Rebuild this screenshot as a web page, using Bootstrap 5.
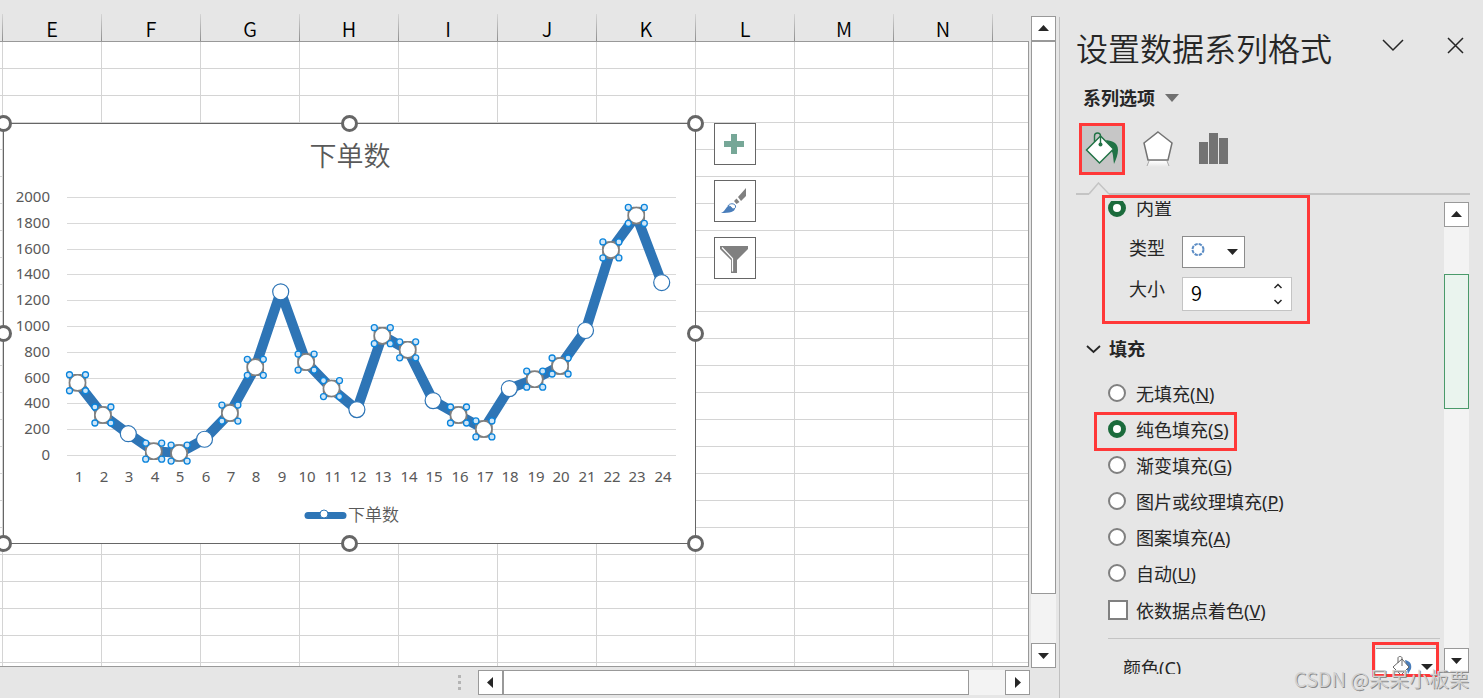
<!DOCTYPE html>
<html lang="zh-CN">
<head>
<meta charset="utf-8">
<meta name="viewport" content="width=device-width, initial-scale=1">
<title>设置数据系列格式</title>
<link rel="stylesheet" href="https://cdn.jsdelivr.net/npm/bootstrap@5.3.0/dist/css/bootstrap.min.css">
<style>
  :root { --chrome: #e6e6e6; --ink: #262626; --edge: #999; --rule: #d4d4d4; --mark: #ff3838; --excel: #217346; --cjk: "Noto Sans", "Noto Sans CJK SC", sans-serif; }
  body { background: var(--chrome); color: var(--ink); font: 18px/24px var(--cjk); }
  svg { display: block; flex: none; }
  button { color: inherit; font: inherit; }

  /* worksheet */
  .sheet-top { padding-top: 14px; }
  .col-heads { height: 28px; border-bottom: 1px solid var(--edge); }
  .col-head { flex: 0 0 99px; text-align: center; font: 350 20px/30px "Noto Sans CJK SC", sans-serif; color: #000;
    border-right: 1px solid; border-image: linear-gradient(#d8d8d8, #8c8c8c) 1; }
  .col-head.first { flex-basis: 3px; }
  .cells { border-right: 1px solid var(--edge); border-bottom: 1px solid var(--edge); background-color: #fff;
    background-image: linear-gradient(var(--rule) 1px, transparent 1px), linear-gradient(90deg, var(--rule) 1px, transparent 1px);
    background-size: 100% 27px, 99px 100%; background-position: 0 26px, 2px 0; }
  .chart-box { left: 3px; top: 81px; width: 693px; height: 421px; background: #fff; border: 1px solid #666; }
  .chart-box svg { margin: -1px; overflow: visible; }
  .chart-box text { fill: #595959; font: 15px var(--cjk); text-anchor: middle; }
  .chart-box .y-axis text { text-anchor: end; }
  .chart-box .chart-title { font: 350 27px "Noto Sans CJK SC", sans-serif; }
  .chart-box .legend-text { font: 350 17px "Noto Sans CJK SC", sans-serif; text-anchor: start; }
  .chart-tools { left: 714px; top: 81px; gap: 15px; }
  .chart-tool { width: 42px; height: 42px; padding: 0; border: 1px solid #666; background: #fff; }
  .chart-tool svg { margin: -1px; }

  /* scroll bars */
  .bar-v { width: 25px; background: #f3f3f3; }
  .bar-h { height: 25px; background: #f3f3f3; }
  .bar-main { margin: 16px 3px 0 2px; }
  .bar-arrow { flex: none; width: 25px; height: 25px; padding: 0; border: 1px solid var(--edge); background: #fff; }
  .bar-arrow svg { margin: -1px; }
  .bar-thumb { background: #fff; border: 1px solid var(--edge); }
  .bar-thumb.live { background: #eaf4ee; border-color: #4a9a6a; }
  .sheet-row { margin-bottom: -1px; }
  .sheet-top { margin-bottom: 1px; }
  .bottom-bar { height: 31px; padding: 3px 29px 3px 458px; gap: 17px; }
  .grip-dots i { display: block; width: 3px; height: 3px; margin: 3px 0; background: #b4b4b4; }

  /* task pane */
  .pane { flex: 0 0 424px; padding: 0 13px 0 16px; margin-top: 17px; border-left: 1px solid #c0c0c0; }
  .pane-head { height: 65px; }
  .pane-title { font: 350 32px/60px "Noto Sans CJK SC", sans-serif; }
  .plain-btn { padding: 0; border: 0; background: none; }
  .pane-menu { margin: 0 42px 0 0; }
  .group-btn { height: 24px; padding-left: 7px; gap: 10px; margin-top: 5px; font-weight: 700; }
  .pane-tabs { gap: 10px; margin-top: 13px; padding-left: 3px; }
  .pane-tab { width: 46px; height: 52px; padding: 0; border: 3px solid transparent; background: none; }
  .pane-tab.active { background: #c6c6c6; border-color: var(--mark); }
  .tab-rule { height: 20px; }
  .tab-rule svg { margin-top: 7px; }
  .tab-rule hr { height: 2px; background: #c4c4c4; border: 0; opacity: 1; margin: 18px 0 0; }
  .pane-body { margin: 6px 1px 24px 0; }
  .pane-fields { overflow: hidden; margin-right: 4px; }
  .opt { height: 36px; padding-left: 32px; gap: 10px; }
  .opt span { padding-top: 2px; }
  .opt input { appearance: none; flex: none; width: 18px; height: 18px; margin: 0; border: 2px solid #808080; background: #fff; border-radius: 50%; }
  .opt input:checked { border: 5px solid #1b6b3c; }
  .opt input[type=checkbox] { width: 20px; height: 20px; border-radius: 0; }
  .opt.tick { gap: 8px; margin-top: 1px; }
  .opt.builtin { height: 24px; margin-top: -5px; }
  .field { padding-left: 53px; gap: 17px; }
  .type-field { margin-top: 16px; }
  .size-field { margin-top: 9px; }
  .type-box { width: 63px; height: 32px; }
  .type-box select { appearance: none; width: 100%; height: 100%; border: 1px solid #8c8c8c; border-radius: 0; background: #fff; }
  .type-box svg { left: 0; top: 0; pointer-events: none; }
  .size-box { width: 110px; height: 34px; background: #fff; border: 1px solid #c4c4c4; }
  .size-box input { width: 80px; height: 30px; border: 0; padding: 0 8px; background: none; color: #000; font: 350 20px/30px "Noto Sans CJK SC", sans-serif; }
  .size-box button { width: 26px; height: 16px; }
  .section-btn { height: 24px; margin: 26px 0 14px; padding-left: 10px; gap: 8px; font-weight: 700; }
  .field-rule { margin: 10px 0 0 32px; border: 0; height: 1px; background: #c4c4c4; opacity: 1; }
  .color-row { padding: 9px 2px 0 47px; }
  .color-btn { width: 62px; height: 32px; padding: 0; border: 0; border-top: 1px solid #999; background: #fff; }
  .note { border: 3px solid var(--mark); pointer-events: none; }
  .note-marker { left: 26px; top: -6px; width: 208px; height: 129px; }
  .note-solid { left: 18px; top: 211px; width: 143px; height: 39px; }
  .note-color { right: 30px; bottom: -3px; width: 67px; height: 35px; }
  .bar-pane { margin: 1px 0 1px; }
  .credit { right: 14px; bottom: 4px; font: 350 20px/30px "Noto Sans CJK SC", sans-serif; color: #d2d2d2; text-shadow: 1px 1px 0 #8c8c8c; }
</style>
</head>
<body class="vh-100 overflow-hidden d-flex">

<main class="d-flex flex-column flex-grow-1 overflow-hidden">
  <div class="sheet-row d-flex flex-grow-1 overflow-hidden">
    <section class="sheet-top d-flex flex-column flex-grow-1 overflow-hidden" aria-label="工作表">
      <div class="col-heads d-flex overflow-hidden" id="colHeads"><div class="col-head first"></div></div>
      <div class="cells flex-grow-1 position-relative">
        <div class="chart-box position-absolute">
          <svg id="chart" width="693" height="421" viewBox="3 123 693 421" role="img" aria-label="下单数">
            <text class="chart-title" x="350" y="166">下单数</text>
            <g class="grid-lines" stroke="#d9d9d9" shape-rendering="crispEdges"></g>
            <g class="y-axis"></g>
            <g class="x-axis"></g>
            <polyline fill="none" stroke="#2e75b6" stroke-width="10" stroke-linejoin="round"/>
            <g class="markers" fill="#fff"></g>
            <path d="M308 515.500H343" stroke="#2e75b6" stroke-width="7" stroke-linecap="round"/>
            <circle cx="324" cy="514" r="4" fill="#fff" stroke="#2e75b6"/>
            <text class="legend-text" x="348" y="521">下单数</text>
            <g class="handles" fill="#fff" stroke="#666" stroke-width="3"></g>
          </svg>
        </div>
        <div class="chart-tools position-absolute d-flex flex-column">
          <button class="chart-tool" type="button" aria-label="图表元素">
            <svg width="42" height="42"><path d="M17 11h6v7h7v6h-7v7h-6v-7h-7v-6h7z" fill="#76a797"/></svg>
          </button>
          <button class="chart-tool" type="button" aria-label="图表样式">
            <svg width="42" height="42"><path d="M32 8v8l-5 5-3-4zM22.500 18.500l3 3.500-3 2-2.500-3z" fill="#808080"/><path d="M7 33c3-1 4-4 6-6 2-3 8-2 8 1 0 4-5 5-14 5z" fill="#4a7ebb"/><path d="M14 26c1-3 7-3 7.500 0 .5 2-1 3-3 3-1-2-2-3-4.500-3z" fill="#fff" stroke="#4a7ebb"/></svg>
          </button>
          <button class="chart-tool" type="button" aria-label="图表筛选器">
            <svg width="42" height="42"><path d="M6 9h28v3L23 23v13h-6V23L6 12z" fill="#808080"/><path d="M8 10.500l10.500 11v13" fill="none" stroke="#fff" stroke-width="1.200"/></svg>
          </button>
        </div>
      </div>
    </section>
    <div class="bar-v bar-main d-flex flex-column">
      <button class="bar-arrow" type="button" aria-label="向上"><svg width="25" height="25"><path d="M7 15h11l-5.500-6z" fill="#262626"/></svg></button>
      <div class="bar-thumb" style="flex:553 0 0"></div><div style="flex:49 0 0"></div>
      <button class="bar-arrow" type="button" aria-label="向下"><svg width="25" height="25"><path d="M7 10h11l-5.500 6z" fill="#262626"/></svg></button>
    </div>
  </div>
  <div class="bottom-bar d-flex align-items-center">
    <div class="grip-dots"><i></i><i></i><i></i></div>
    <div class="bar-h d-flex flex-grow-1">
      <button class="bar-arrow" type="button" aria-label="向左"><svg width="25" height="25"><path d="M15 7v11l-6-5.500z" fill="#262626"/></svg></button>
      <div class="bar-thumb" style="flex:466 0 0"></div><div style="flex:36 0 0"></div>
      <button class="bar-arrow" type="button" aria-label="向右"><svg width="25" height="25"><path d="M10 7v11l6-5.500z" fill="#262626"/></svg></button>
    </div>
  </div>
</main>

<aside class="pane d-flex flex-column" aria-label="设置数据系列格式">
  <header class="pane-head d-flex align-items-start">
    <h1 class="pane-title m-0 me-auto">设置数据系列格式</h1>
    <div class="d-flex align-items-center h-100 pb-2">
      <button class="plain-btn pane-menu" type="button" aria-label="窗格选项"><svg width="22" height="16"><path d="M1 3l10 10L21 3" fill="none" stroke="#262626" stroke-width="1.500"/></svg></button>
      <button class="plain-btn me-1" type="button" aria-label="关闭"><svg width="20" height="18"><path d="M2 2l15 15M17 2L2 17" fill="none" stroke="#262626" stroke-width="1.500"/></svg></button>
    </div>
  </header>
  <button class="plain-btn group-btn d-flex align-items-center" type="button">系列选项<svg width="14" height="8"><path d="M0 0h14l-7 8z" fill="#707070"/></svg></button>
  <nav class="pane-tabs d-flex" aria-label="选项类别">
    <button class="pane-tab active" type="button" aria-label="填充与线条">
      <svg width="40" height="46" viewBox="1082 126 40 46"><path d="M1106 140c7 1 12 3 12 10 0 5-2 9-4 14-1-8-1-12-3-14z" fill="#217346"/><path d="M1100.500 136l13 13-14 14-13-13z" fill="#fff" stroke="#217346" stroke-width="1.500"/><path d="M1094.500 142v-6c0-4 6-4 6 0v8" fill="none" stroke="#217346" stroke-width="1.400"/><circle cx="1100.500" cy="144.500" r="2" fill="#217346"/></svg>
    </button>
    <button class="pane-tab" type="button" aria-label="效果">
      <svg width="40" height="46" viewBox="1138 126 40 46"><defs><linearGradient id="fade" x2="0" y2="1"><stop stop-color="#fff"/><stop offset="1" stop-color="#e6e6e6"/></linearGradient></defs><path d="M1149 161h18l2 6h-22z" fill="url(#fade)"/><path d="M1149 161l-2 5M1167 161l2 5" stroke="#aaa"/><path d="M1158 132l14 11-4 17h-20l-4-17z" fill="#fff" stroke="#737373" stroke-width="1.500"/></svg>
    </button>
    <button class="pane-tab" type="button" aria-label="系列选项">
      <svg width="40" height="46" viewBox="1194 126 40 46"><path d="M1199 142h9v22h-9zM1209 133h9v31h-9zM1219 138h9v26h-9z" fill="#737373"/></svg>
    </button>
  </nav>
  <div class="tab-rule d-flex">
    <hr style="width:13px"><svg width="20" height="13"><path d="M0 12L9.500 1 20 12" fill="none" stroke="#c4c4c4" stroke-width="1.500"/></svg><hr class="flex-grow-1">
  </div>

  <div class="pane-body d-flex flex-grow-1 position-relative" style="min-height:0">
    <form class="pane-fields flex-grow-1">
      <label class="opt builtin d-flex align-items-center"><input type="radio" name="marker" checked>内置</label>
      <div class="field type-field d-flex">
        <label for="mtype">类型</label>
        <div class="type-box position-relative">
          <select id="mtype"><option aria-label="圆形"></option></select>
          <svg class="position-absolute" width="63" height="32"><circle cx="16" cy="13.500" r="5.500" fill="#fff" stroke="#5b8cc4" stroke-width="2" stroke-dasharray="3.320 1"/><path d="M45 13h11l-5.500 6z" fill="#262626"/></svg>
        </div>
      </div>
      <div class="field size-field d-flex">
        <label for="msize">大小</label>
        <div class="size-box d-flex">
          <input id="msize" type="text" value="9">
          <div class="d-flex flex-column">
            <button class="plain-btn" type="button" aria-label="增大"><svg width="26" height="16"><path d="M11.500 10l3.500-3.500 3.500 3.500" fill="none" stroke="#262626" stroke-width="1.500"/></svg></button>
            <button class="plain-btn" type="button" aria-label="减小"><svg width="26" height="16"><path d="M11.500 6l3.500 3.500L18.500 6" fill="none" stroke="#262626" stroke-width="1.500"/></svg></button>
          </div>
        </div>
      </div>
      <button class="plain-btn section-btn d-flex align-items-center" type="button"><svg width="15" height="10"><path d="M1 2l6.500 6L14 2" fill="none" stroke="#262626" stroke-width="1.800"/></svg>填充</button>
      <label class="opt d-flex align-items-center"><input type="radio" name="fill"><span>无填充(<u>N</u>)</span></label>
      <label class="opt d-flex align-items-center"><input type="radio" name="fill" checked><span>纯色填充(<u>S</u>)</span></label>
      <label class="opt d-flex align-items-center"><input type="radio" name="fill"><span>渐变填充(<u>G</u>)</span></label>
      <label class="opt d-flex align-items-center"><input type="radio" name="fill"><span>图片或纹理填充(<u>P</u>)</span></label>
      <label class="opt d-flex align-items-center"><input type="radio" name="fill"><span>图案填充(<u>A</u>)</span></label>
      <label class="opt d-flex align-items-center"><input type="radio" name="fill"><span>自动(<u>U</u>)</span></label>
      <label class="opt tick d-flex align-items-center"><input type="checkbox"><span>依数据点着色(<u>V</u>)</span></label>
      <hr class="field-rule">
      <div class="color-row d-flex justify-content-between">
        <label for="fillColor" class="pt-2">颜色(<u>C</u>)</label>
        <button id="fillColor" class="color-btn" type="button" aria-label="填充颜色">
          <svg width="62" height="31" viewBox="1375 649 62 31"><path d="M1404 660c5 1 7 4 6 9l-3 5z" fill="#4a7ebb"/><path d="M1401 659l7 8-8 8-8-8z" fill="#fff" stroke="#666"/><path d="M1397 663v-5c0-2 4-2 4 0v8" fill="none" stroke="#666"/><path d="M1420 664h12l-6 6z" fill="#262626"/></svg>
        </button>
      </div>
    </form>
    <div class="bar-v bar-pane d-flex flex-column">
      <button class="bar-arrow" type="button" aria-label="向上"><svg width="25" height="25"><path d="M7 15h11l-5.500-6z" fill="#262626"/></svg></button>
      <div style="flex:47 0 0"></div><div class="bar-thumb live" style="flex:134 0 0"></div><div style="flex:240 0 0"></div>
      <button class="bar-arrow" type="button" aria-label="向下"><svg width="25" height="25"><path d="M7 10h11l-5.500 6z" fill="#262626"/></svg></button>
    </div>
    <div class="note note-marker position-absolute"></div>
    <div class="note note-solid position-absolute"></div>
    <div class="note note-color position-absolute"></div>
  </div>
</aside>
<div class="credit position-absolute">CSDN @呆呆小板栗</div>

<script src="https://cdn.jsdelivr.net/npm/bootstrap@5.3.0/dist/js/bootstrap.bundle.min.js"></script>
<script>
  const heads = document.getElementById('colHeads');
  for (const name of [...'EFGHIJKLMN', '']) {
    const cell = document.createElement('div');
    cell.className = 'col-head';
    cell.textContent = name;
    heads.append(cell);
  }

  const orders = [560, 310, 165, 30, 15, 122, 325, 680, 1265, 720, 515, 352, 925, 815, 422, 310, 202, 515, 588, 690, 965, 1590, 1857, 1337];
  const chart = document.getElementById('chart');
  const put = (parent, tag, attrs, text) => {
    const el = document.createElementNS('http://www.w3.org/2000/svg', tag);
    for (const k in attrs) el.setAttribute(k, attrs[k]);
    if (text !== undefined) el.textContent = text;
    chart.querySelector(parent).append(el);
  };
  const yOf = v => 455 - v * 258 / 2000;
  for (let v = 0; v <= 2000; v += 200) {
    const y = Math.round(yOf(v)) + 0.5;
    put('.grid-lines', 'path', { d: `M66.5 ${y}H676` });
    put('.y-axis', 'text', { x: 50, y: Math.round(yOf(v)) + 5 }, v);
  }
  const pts = orders.map((v, i) => [77.5 + 25.4 * i, yOf(v)]);
  chart.querySelector('polyline').setAttribute('points', pts.join(' '));
  pts.forEach(([x, y], i) => {
    put('.x-axis', 'text', { x: Math.round(x + 1), y: 482 }, i + 1);
    const picked = (i + 1) % 3 !== 0;
    if (picked) put('.markers', 'rect', { x: x - 8, y: y - 8, width: 16, height: 16, rx: 5, fill: 'none', stroke: '#7f7f7f', 'stroke-width': 1.5 });
    put('.markers', 'circle', { cx: x, cy: y, r: 8, stroke: picked ? '#7f7f7f' : '#2e75b6', 'stroke-width': picked ? 1.5 : 1.2 });
    if (picked) for (const [dx, dy] of [[-8, -8], [8, -8], [-8, 8], [8, 8]])
      put('.markers', 'circle', { cx: x + dx, cy: y + dy, r: 3, fill: '#cfe6f8', stroke: '#0a84dc', 'stroke-width': 1.3 });
  });
  for (const [x, y] of [[3.5, 123.5], [349.5, 123.5], [695.5, 123.5], [3.5, 333.5], [695.5, 333.5], [3.5, 543.5], [349.5, 543.5], [695.5, 543.5]])
    put('.handles', 'circle', { cx: x, cy: y, r: 7 });
</script>
</body>
</html>
